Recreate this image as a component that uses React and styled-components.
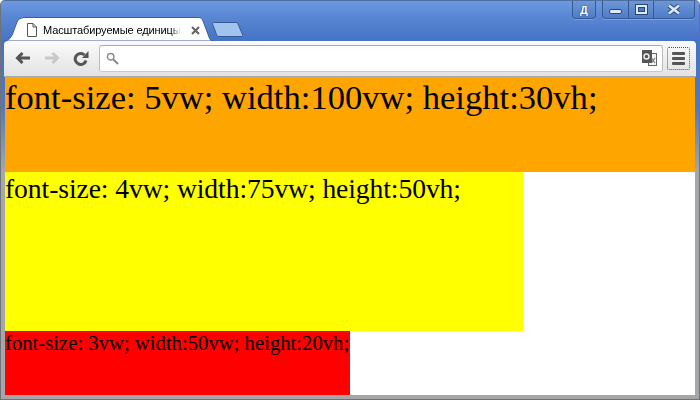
import React from "react";
import styled, { createGlobalStyle } from "styled-components";

const Global = createGlobalStyle`
  html, body { margin: 0; padding: 0; width: 700px; height: 400px; overflow: hidden; }
  body { font-family: "Liberation Serif", serif; background: #fff; }
  * { box-sizing: border-box; }
`;

const Win = styled.div`
  width: 700px;
  height: 400px;
  display: flex;
  flex-direction: column;
  padding: 0 4px 4px 4px;
  border: 1px solid #6f7277;
  border-top-color: #4d6f9f;
  border-radius: 5px 5px 0 0;
  background: linear-gradient(180deg, #6d9ade 0, #5c8ad6 12px, #4573c4 41px, #4d78c4 105px, #a4a6a8 170px, #a4a6a8 100%);
`;

const TitleBar = styled.div`
  height: 40px;
  flex: none;
  display: flex;
  align-items: flex-start;
  justify-content: space-between;
`;

const TabStrip = styled.div`
  display: flex;
  align-items: flex-start;
  padding-top: 16px;
  margin-left: -1px;
  height: 40px;
`;

const Tab = styled.div`
  position: relative;
  width: 210px;
  height: 24px;
  display: flex;
  align-items: center;
  padding: 2px 0 0 23px;
  font: 11px "Liberation Sans", Arial, sans-serif;
  letter-spacing: -0.12px;
  color: #000;
`;

const TabShape = styled.svg`
  position: absolute;
  left: 0;
  top: 0;
`;

const TabFile = styled.svg`
  position: relative;
  flex: none;
  margin-right: 6px;
`;

const TabTitle = styled.span`
  position: relative;
  width: 138px;
  overflow: hidden;
  white-space: nowrap;
  -webkit-mask-image: linear-gradient(90deg, #000 128px, transparent 138px);
  mask-image: linear-gradient(90deg, #000 128px, transparent 138px);
`;

const TabClose = styled.svg`
  position: relative;
  flex: none;
  margin-left: 10px;
`;

const NewTab = styled.svg`
  flex: none;
  margin: 5px 0 0 -2px;
`;

const Caption = styled.div`
  display: flex;
  align-items: flex-start;
  gap: 6px;
`;

const CaptionGroup = styled.div`
  display: flex;
  height: 18px;
  border: 1px solid #36598f;
  border-top: 0;
  border-radius: 0 0 4px 4px;
  background: linear-gradient(180deg, #6d97d8, #4f7cc8);
  box-shadow: 0 1px 0 rgba(255, 255, 255, 0.25);
`;

const CaptionButton = styled.div`
  width: ${(p) => p.$w}px;
  display: flex;
  align-items: center;
  justify-content: center;
  & + & { border-left: 1px solid #36598f; }
`;

const LangLabel = styled.span`
  font: bold 11px "Liberation Sans", Arial, sans-serif;
  color: #fff;
  text-shadow: 0 0 1px #1d3560, 0 0 1px #1d3560;
`;

const Toolbar = styled.div`
  height: 36px;
  flex: none;
  display: flex;
  align-items: center;
  margin: 0 -1px;
  padding: 0 0 1px 11px;
  border-radius: 4px 4px 0 0;
  border-bottom: 1px solid #a8a8a8;
  background: linear-gradient(180deg, #fbfbfb, #e2e2e2);
`;

const NavIcon = styled.svg`
  flex: none;
  margin-right: ${(p) => p.$gap}px;
`;

const Omnibox = styled.div`
  flex: 1;
  height: 27px;
  display: flex;
  align-items: center;
  justify-content: space-between;
  padding: 0 5px 0 6px;
  background: #fff;
  border: 1px solid #bdbdbd;
  border-top-color: #a9a9a9;
  border-bottom-color: #c8c8c8;
  border-radius: 3px;
`;

const MenuButton = styled.div`
  width: 23px;
  height: 23px;
  margin: 0 6px 0 4px;
  flex: none;
  display: flex;
  flex-direction: column;
  align-items: center;
  justify-content: center;
  gap: 2px;
  border: 1px dotted #555;
  border-radius: 2px;
`;

const MenuBar = styled.span`
  width: 13px;
  height: 3px;
  border-radius: 1px;
  background: #555;
`;

const Page = styled.div`
  flex: 1;
  min-height: 0;
  background: #fff;
  color: #000;
  overflow: hidden;
`;

const Block = styled.div`
  width: ${(p) => (p.$w * 690) / 100}px;
  height: ${(p) => (p.$h * 318) / 100}px;
  padding-top: 1px;
  background: ${(p) => p.$bg};
  font-size: ${(p) => (p.$fs * 690) / 100}px;
  letter-spacing: ${(p) => p.$ls}px;
  line-height: normal;
  white-space: nowrap;
`;

const MinimizeIcon = styled.svg`
  margin-top: 4px;
`;

const blocks = [
  { fs: 5, w: 100, h: 30, bg: "#ffa500", ls: 0.03 },
  { fs: 4, w: 75, h: 50, bg: "#ffff00", ls: -0.08 },
  { fs: 3, w: 50, h: 20, bg: "#ff0000", ls: 0 },
];

export default function App() {
  return (
    <>
      <Global />
      <Win>
        <TitleBar>
          <TabStrip>
            <Tab>
              <TabShape width="210" height="24" viewBox="0 0 210 24">
                <path
                  d="M0 24 C5 24 8 20 10 13 L13 5 C14 2 17 .5 21 .5 L194 .5 C197 .5 198 1.500 199 4 L205 20 C206 23 207 24 210 24 Z"
                  fill="#fff"
                  stroke="#3c5f9c"
                  strokeWidth="1"
                />
              </TabShape>
              <TabFile width="10" height="14" viewBox="0 0 10 14">
                <path d="M.5 .5 H6 L9.500 4 V13.500 H.5 Z M6 .5 V4 H9.500" fill="#fff" stroke="#555" />
              </TabFile>
              <TabTitle>Масштабируемые единицы</TabTitle>
              <TabClose width="9" height="9" viewBox="0 0 9 9">
                <path d="M1 1 L8 8 M8 1 L1 8" stroke="#666" strokeWidth="2.200" />
              </TabClose>
            </Tab>
            <NewTab width="31" height="15" viewBox="0 0 31 15">
              <path
                d="M1.500 .5 H24 C25 .5 25.500 1 26 2 L30.500 12.500 C31 14 30 14.500 29 14.500 H7 C5.500 14.500 5 14 4.500 12.500 L.5 2 C.2 1 .7 .5 1.500 .5 Z"
                fill="#a3c3ef"
                stroke="#36598f"
              />
            </NewTab>
          </TabStrip>
          <Caption>
            <CaptionGroup>
              <CaptionButton $w={22}>
                <LangLabel>Д</LangLabel>
              </CaptionButton>
            </CaptionGroup>
            <CaptionGroup>
              <CaptionButton $w={25}>
                <MinimizeIcon width="13" height="5" viewBox="0 0 13 5">
                  <rect x=".5" y=".5" width="12" height="4" rx="1.500" fill="#dfe9f7" stroke="#2a4674" />
                </MinimizeIcon>
              </CaptionButton>
              <CaptionButton $w={25}>
                <svg width="13" height="11" viewBox="0 0 13 11">
                  <rect x=".5" y=".5" width="12" height="10" fill="none" stroke="#2a4674" />
                  <rect x="2" y="2" width="9" height="7" fill="none" stroke="#dfe9f7" strokeWidth="2" />
                  <rect x="3.500" y="3.500" width="6" height="4" fill="#4f7cc8" stroke="#2a4674" />
                </svg>
              </CaptionButton>
              <CaptionButton $w={41}>
                <svg width="14" height="11" viewBox="0 0 14 11">
                  <path d="M2 1.500 L12 9.500 M12 1.500 L2 9.500" stroke="#2a4674" strokeWidth="4.500" />
                  <path d="M2 1.500 L12 9.500 M12 1.500 L2 9.500" stroke="#dbe6f5" strokeWidth="2.800" />
                </svg>
              </CaptionButton>
            </CaptionGroup>
          </Caption>
        </TitleBar>
        <Toolbar>
          <NavIcon $gap={13} width="16" height="12" viewBox="0 0 16 12">
            <path d="M15 6 H3 M7.500 1 L2.500 6 L7.500 11" fill="none" stroke="#555" strokeWidth="3" />
          </NavIcon>
          <NavIcon $gap={13} width="16" height="12" viewBox="0 0 16 12">
            <path d="M1 6 H13 M8.500 1 L13.500 6 L8.500 11" fill="none" stroke="#c8c8c8" strokeWidth="3" />
          </NavIcon>
          <NavIcon $gap={10} width="16" height="15" viewBox="0 0 16 15">
            <path d="M13 9.500 A5.500 5.500 0 1 1 11.500 4" fill="none" stroke="#555" strokeWidth="3" />
            <path d="M9 7 H15.500 V0 Z" fill="#555" />
          </NavIcon>
          <Omnibox>
            <svg width="13" height="13" viewBox="0 0 14 14">
              <circle cx="5" cy="5" r="3.500" fill="#fff" stroke="#8a8a8a" strokeWidth="1.600" />
              <path d="M8 8 L13 13" stroke="#8a8a8a" strokeWidth="2.200" />
            </svg>
            <svg width="15" height="16" viewBox="0 0 15 16">
              <rect x="6.500" y="3.500" width="8" height="12" fill="#f4f4f4" stroke="#666" />
              <rect x="0" y="0" width="10" height="13" fill="#555" />
              <circle cx="4.500" cy="6.500" r="2.500" fill="none" stroke="#eee" strokeWidth="1.400" />
              <path d="M9.500 8 L13 13 M13 8 L9.500 13" stroke="#777" strokeWidth="1.200" />
            </svg>
          </Omnibox>
          <MenuButton>
            <MenuBar />
            <MenuBar />
            <MenuBar />
          </MenuButton>
        </Toolbar>
        <Page>
          {blocks.map((b) => (
            <Block key={b.fs} $w={b.w} $h={b.h} $bg={b.bg} $fs={b.fs} $ls={b.ls}>
              font-size: {b.fs}vw; width:{b.w}vw; height:{b.h}vh;
            </Block>
          ))}
        </Page>
      </Win>
    </>
  );
}
